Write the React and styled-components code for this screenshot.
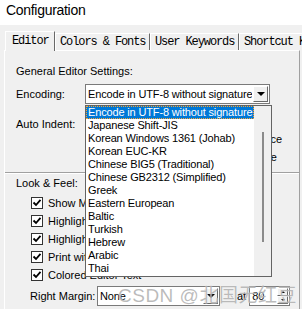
import React from 'react'
import styled, { createGlobalStyle } from 'styled-components'

const Global = createGlobalStyle`
    html, body {
        margin: 0;
        width: 302px;
        height: 309px;
        overflow: hidden;
        background: #f0f0f0;
        font-family: "Liberation Sans", Arial, sans-serif;
        font-size: 11px;
        color: #000;
    }
`;

const Window = styled.div`
    position: relative;
    width: 302px;
    height: 309px;
    overflow: hidden;
`;

const TitleBar = styled.div`
    height: 25px;
    background: #fff;
    padding-left: 6px;
    box-sizing: border-box;
    font-size: 14px;
    letter-spacing: -0.3px;
    line-height: 21px;
`;

const TabStrip = styled.div`
    display: flex;
    align-items: flex-end;
    height: 19px;
    margin-top: 6px;
    padding-left: 5px;
    position: relative;
    z-index: 2;
`;

const Tab = styled.div`
    flex-shrink: 0;
    box-sizing: border-box;
    width: ${p => p.$w}px;
    height: ${p => p.$active ? 20 : 17}px;
    margin-bottom: ${p => p.$active ? -1 : 0}px;
    padding: ${p => p.$active ? '2px 0 0 6px' : '1px 0 0 4px'};
    background: #f0f0f0;
    border-top: 1px solid #fff;
    border-left: 1px solid #fff;
    border-right: 1px solid #696969;
    font-family: "Liberation Mono", "Courier New", monospace;
    font-size: 12px;
    letter-spacing: -1.1px;
    line-height: 14px;
    white-space: nowrap;
    overflow: hidden;
`;

const Panel = styled.div`
    position: relative;
    box-sizing: border-box;
    width: 296px;
    height: 259px;
    margin-left: 4px;
    padding: 13px 0 0 11px;
    border-top: 1px solid #fff;
    border-left: 1px solid #fff;
    border-right: 1px solid #a0a0a0;
`;

const Heading = styled.div`
    line-height: 14px;
    height: 14px;
    margin-top: ${p => p.$top || 0}px;
`;

const FieldRow = styled.div`
    display: flex;
    align-items: ${p => p.$start ? 'flex-start' : 'center'};
    margin-top: ${p => p.$top || 0}px;
    padding-left: ${p => p.$indent || 0}px;
`;

const FieldLabel = styled.div`
    flex-shrink: 0;
    width: ${p => p.$w}px;
    line-height: 20px;
    white-space: nowrap;
`;

const Select = styled.div`
    flex-shrink: 0;
    display: flex;
    box-sizing: border-box;
    width: ${p => p.$w}px;
    height: 20px;
    border: 1px solid #7a7a7a;
    background: #fff;
`;

const SelectValue = styled.div`
    flex: 1;
    padding-left: 2px;
    line-height: 18px;
    letter-spacing: -0.15px;
    white-space: nowrap;
    overflow: hidden;
`;

const DropButton = styled.div`
    box-sizing: border-box;
    width: ${p => p.$w || 15}px;
    height: ${p => p.$h || 16}px;
    margin: 1px;
    background: #f0f0f0;
    border-top: 1px solid #fff;
    border-left: 1px solid #fff;
    border-right: 1px solid #696969;
    border-bottom: 1px solid #696969;
    display: flex;
    align-items: center;
    justify-content: center;
`;

const Arrow = styled.div`
    width: 0;
    height: 0;
    border-left: ${p => p.$s || 4}px solid transparent;
    border-right: ${p => p.$s || 4}px solid transparent;
    ${p => p.$up
        ? `border-bottom: ${p.$s || 4}px solid #000;`
        : `border-top: ${p.$s || 4}px solid #000;`}
`;

const SideOptions = styled.div`
    margin-left: auto;
    margin-right: 17px;
    padding-top: 16px;
    width: 110px;
    text-align: right;
`;

const SideOption = styled.div`
    line-height: 18px;
    white-space: nowrap;
    padding-right: ${p => p.$inset || 0}px;
`;

const Separator = styled.div`
    margin: 6px 0 0 -11px;
    height: 1px;
    background: #a0a0a0;
    border-bottom: 1px solid #fff;
`;

const CheckList = styled.div`
    margin-top: 4px;
`;

const CheckRow = styled.div`
    display: flex;
    align-items: center;
    height: 18px;
    padding-left: 15px;
    white-space: nowrap;
`;

const Box = styled.div`
    box-sizing: border-box;
    width: 12px;
    height: 12px;
    margin-right: 5px;
    border: 1px solid #333;
    background: #fff;
    display: flex;
    align-items: center;
    justify-content: center;
`;

const Spinner = styled.div`
    display: flex;
    box-sizing: border-box;
    width: 41px;
    height: 20px;
    border: 1px solid #7a7a7a;
    background: #fff;
`;

const SpinButtons = styled.div`
    display: flex;
    flex-direction: column;
    padding: 1px 1px 1px 0;
    gap: 0;
`;

const SpinButton = styled(DropButton)`
    margin: 0;
`;

const AtLabel = styled.div`
    margin: 0 3px 0 17px;
`;

const DropList = styled.div`
    position: absolute;
    left: 80px;
    top: 54px;
    z-index: 3;
    box-sizing: border-box;
    width: 187px;
    height: 172px;
    border: 1px solid #646464;
    background: #fff;
    display: flex;
`;

const Items = styled.div`
    width: 168px;
`;

const Item = styled.div`
    box-sizing: border-box;
    height: 13px;
    line-height: 13px;
    padding-left: 2px;
    letter-spacing: -0.15px;
    white-space: nowrap;
    background: ${p => p.$sel ? '#0078d7' : 'transparent'};
    color: ${p => p.$sel ? '#fff' : '#000'};
    outline: ${p => p.$sel ? '1px dotted #f7a632' : 'none'};
    outline-offset: -1px;
`;

const ScrollTrack = styled.div`
    width: 17px;
    background: #f0f0f0;
    display: flex;
    justify-content: center;
`;

const Thumb = styled.div`
    width: 2px;
    height: 110px;
    margin-top: 26px;
    background: #8b8b8b;
`;

const Watermark = styled.div`
    position: absolute;
    left: 118px;
    top: 280px;
    z-index: 5;
    font-family: "Liberation Sans", "Noto Sans CJK SC", sans-serif;
    font-size: 19px;
    letter-spacing: 0.5px;
    color: rgba(120, 120, 120, 0.5);
    text-shadow: 0 0 1px rgba(255, 255, 255, 0.9);
    white-space: nowrap;
    pointer-events: none;
`;

const encodings = [
    'Encode in UTF-8 without signature',
    'Japanese Shift-JIS',
    'Korean Windows 1361 (Johab)',
    'Korean EUC-KR',
    'Chinese BIG5 (Traditional)',
    'Chinese GB2312 (Simplified)',
    'Greek',
    'Eastern European',
    'Baltic',
    'Turkish',
    'Hebrew',
    'Arabic',
    'Thai',
];

const checks = [
    'Show Margin Line',
    'Highlight Matching Braces',
    'Highlight Current Line',
    'Print with Syntax Colors',
    'Colored Editor Text',
];

const tabs = [
    { label: 'Editor', w: 50 },
    { label: 'Colors & Fonts', w: 95 },
    { label: 'User Keywords', w: 89 },
    { label: 'Shortcut Keys', w: 80 },
];

function Check() {
    return (
        <svg width="10" height="10" viewBox="0 0 10 10">
            <path d="M1.5 4.5 L4 7 L8.5 1.8" fill="none" stroke="#000" strokeWidth="1.8" />
        </svg>
    )
}

export default function App() {
    return (
        <Window>
            <Global />
            <TitleBar>Configuration</TitleBar>
            <TabStrip>
                {tabs.map((t, i) => (
                    <Tab key={t.label} $w={t.w} $active={i === 0}>{t.label}</Tab>
                ))}
            </TabStrip>
            <Panel>
                <Heading>General Editor Settings:</Heading>
                <FieldRow $top={6}>
                    <FieldLabel $w={69}>Encoding:</FieldLabel>
                    <Select $w={185}>
                        <SelectValue>{encodings[0]}</SelectValue>
                        <DropButton><Arrow /></DropButton>
                    </Select>
                </FieldRow>
                <FieldRow $top={10} $start>
                    <FieldLabel $w={69}>Auto Indent:</FieldLabel>
                    <Select $w={100}>
                        <SelectValue>Smart</SelectValue>
                    </Select>
                    <SideOptions>
                        <SideOption>Smart Backspace</SideOption>
                        <SideOption $inset={5}>Tab Size</SideOption>
                    </SideOptions>
                </FieldRow>
                <Separator />
                <Heading $top={2}>Look &amp; Feel:</Heading>
                <CheckList>
                    {checks.map(c => (
                        <CheckRow key={c}>
                            <Box><Check /></Box>
                            {c}
                        </CheckRow>
                    ))}
                </CheckList>
                <FieldRow $top={2} $indent={14}>
                    <FieldLabel $w={67}>Right Margin:</FieldLabel>
                    <Select $w={123}>
                        <SelectValue>None</SelectValue>
                        <DropButton><Arrow /></DropButton>
                    </Select>
                    <AtLabel>at</AtLabel>
                    <Spinner>
                        <SelectValue>80</SelectValue>
                        <SpinButtons>
                            <SpinButton $w={11} $h={9}><Arrow $up $s={2} /></SpinButton>
                            <SpinButton $w={11} $h={8}><Arrow $s={2} /></SpinButton>
                        </SpinButtons>
                    </Spinner>
                </FieldRow>
                <DropList>
                    <Items>
                        {encodings.map((e, i) => (
                            <Item key={e} $sel={i === 0}>{e}</Item>
                        ))}
                    </Items>
                    <ScrollTrack><Thumb /></ScrollTrack>
                </DropList>
            </Panel>
            <Watermark>CSDN @北国无红豆</Watermark>
        </Window>
    )
}
